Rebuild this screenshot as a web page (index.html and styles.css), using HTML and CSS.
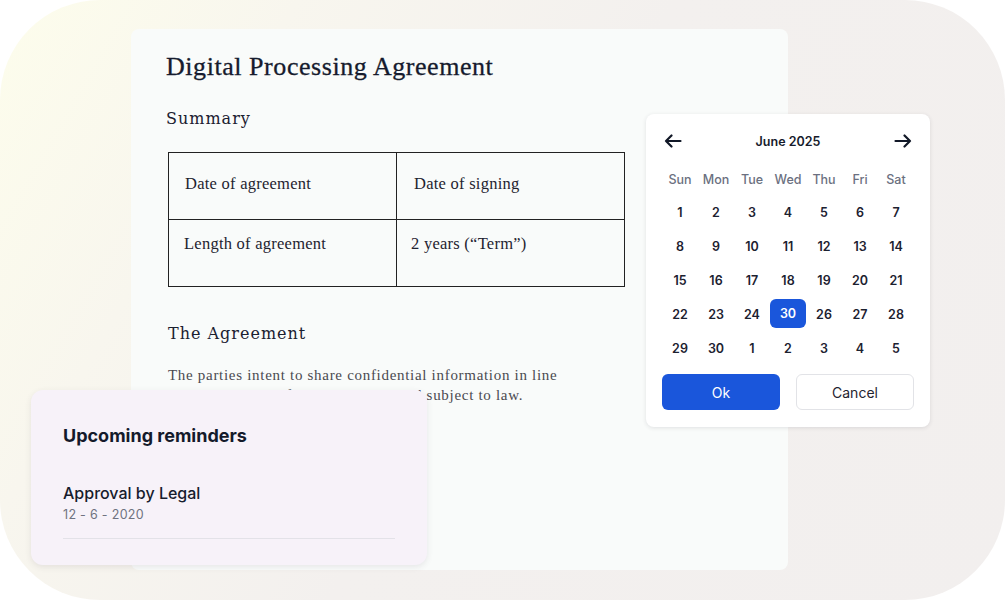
FILE: index.html
```html
<!DOCTYPE html>
<html lang="en">
<head>
<meta charset="utf-8">
<title>Digital Processing Agreement</title>
<link rel="stylesheet" href="styles.css">
</head>
<body>
<div class="stage">
  <section class="doc">
    <h1 class="doc-title">Digital Processing Agreement</h1>
    <h2 class="doc-sub">Summary</h2>
    <table class="summary">
      <tr>
        <td class="c1">Date of agreement</td>
        <td class="c2">Date of signing</td>
      </tr>
      <tr>
        <td class="c1 r2">Length of agreement</td>
        <td class="c2 r2">2 years (“Term”)</td>
      </tr>
    </table>
    <h2 class="doc-sub sub2">The Agreement</h2>
    <p class="doc-text">The parties intent to share confidential information in line and the purpose of this agreement and subject to law.</p>
  </section>

  <aside class="reminders">
    <h3 class="rem-title">Upcoming reminders</h3>
    <div class="rem-item">
      <div class="rem-name">Approval by Legal</div>
      <div class="rem-date">12 - 6 - 2020</div>
    </div>
  </aside>

  <div class="calendar">
    <div class="cal-head">
      <svg class="arrow" width="18" height="14" viewBox="0 0 18 14"><path d="M16.5 7H2M7.5 1.5L2 7l5.5 5.5" fill="none" stroke="#111827" stroke-width="2.2" stroke-linecap="round" stroke-linejoin="round"/></svg>
      <span class="cal-month">June 2025</span>
      <svg class="arrow" width="18" height="14" viewBox="0 0 18 14"><path d="M1.5 7H16M10.5 1.5L16 7l-5.5 5.5" fill="none" stroke="#111827" stroke-width="2.2" stroke-linecap="round" stroke-linejoin="round"/></svg>
    </div>
    <div class="cal-grid">
      <span class="dn">Sun</span><span class="dn">Mon</span><span class="dn">Tue</span><span class="dn">Wed</span><span class="dn">Thu</span><span class="dn">Fri</span><span class="dn">Sat</span>
      <span class="d">1</span><span class="d">2</span><span class="d">3</span><span class="d">4</span><span class="d">5</span><span class="d">6</span><span class="d">7</span>
      <span class="d">8</span><span class="d">9</span><span class="d">10</span><span class="d">11</span><span class="d">12</span><span class="d">13</span><span class="d">14</span>
      <span class="d">15</span><span class="d">16</span><span class="d">17</span><span class="d">18</span><span class="d">19</span><span class="d">20</span><span class="d">21</span>
      <span class="d">22</span><span class="d">23</span><span class="d">24</span><span class="d sel">30</span><span class="d">26</span><span class="d">27</span><span class="d">28</span>
      <span class="d">29</span><span class="d">30</span><span class="d">1</span><span class="d">2</span><span class="d">3</span><span class="d">4</span><span class="d">5</span>
    </div>
    <div class="cal-actions">
      <button class="btn btn-ok">Ok</button>
      <button class="btn btn-cancel">Cancel</button>
    </div>
  </div>
</div>
</body>
</html>
```

FILE: styles.css
```css
* { box-sizing: border-box; }
html, body { margin: 0; padding: 0; background: #ffffff; }
body { width: 1005px; height: 600px; overflow: hidden; }

.stage {
  position: relative;
  width: 1005px;
  height: 600px;
  border-radius: 100px;
  background: linear-gradient(120deg, #fdfdec 0%, #f8f6ee 22%, #f3f0ee 50%, #f2efee 100%);
  padding: 29px 0 0 131px;
}

.doc {
  width: 657px;
  height: 541px;
  background: #f9fbfa;
  border-radius: 8px;
  padding: 22px 35px 0 35px;
}

.doc-title {
  margin: 0;
  font-family: "Liberation Serif", serif;
  font-weight: 400;
  font-size: 26px;
  line-height: 32px;
  color: #161b2e;
  letter-spacing: 0.55px;
  -webkit-text-stroke: 0.3px #161b2e;
}

.doc-sub {
  margin: 25px 0 0 0;
  font-family: "DejaVu Serif", serif;
  font-weight: 400;
  font-size: 16px;
  line-height: 22px;
  color: #1b2030;
  letter-spacing: 1px;
}

.summary {
  margin: 22px 0 0 2px;
  width: 457px;
  border-collapse: collapse;
  font-family: "Liberation Serif", serif;
  font-size: 16.5px;
  letter-spacing: 0.25px;
  color: #1f2330;
}
.summary td {
  border: 1.5px solid #222222;
  height: 67px;
  vertical-align: top;
  padding: 21px 16px 0 16px;
  width: 50%;
}
.summary td.c2 { padding-left: 17px; }
.summary td.r2 { padding: 14px 16px 0 15px; }
.summary td.c2.r2 { padding-left: 14px; }

.sub2 { margin-top: 36px; margin-left: 2px; }

.doc-text {
  margin: 20px 0 0 2px;
  width: 400px;
  font-family: "Liberation Serif", serif;
  font-size: 15px;
  line-height: 20px;
  letter-spacing: 0.7px;
  color: #4a4a50;
}

.reminders {
  position: absolute;
  left: 31px;
  top: 390px;
  width: 396px;
  height: 175px;
  background: #f7f2f9;
  border-radius: 12px;
  box-shadow: 0 2px 6px rgba(60, 50, 70, 0.10);
  padding: 34px 32px 0 32px;
  font-family: Inter, "Liberation Sans", sans-serif;
}
.rem-title {
  margin: 0;
  font-size: 18px;
  line-height: 24px;
  font-weight: 700;
  color: #141a2b;
}
.rem-item {
  margin-top: 35px;
  padding-bottom: 15px;
  border-bottom: 1px solid #e3e2e8;
}
.rem-name {
  font-size: 16px;
  line-height: 20px;
  font-weight: 500;
  color: #171c2d;
}
.rem-date {
  margin-top: 4px;
  font-size: 12.5px;
  line-height: 16px;
  letter-spacing: 0.3px;
  color: #6f7280;
}

.calendar {
  position: absolute;
  left: 646px;
  top: 114px;
  width: 284px;
  height: 313px;
  background: #ffffff;
  border-radius: 8px;
  box-shadow: 0 1px 4px rgba(40, 40, 60, 0.12);
  padding: 16px 16px 0 16px;
  font-family: Inter, "Liberation Sans", sans-serif;
}
.cal-head {
  display: flex;
  align-items: center;
  justify-content: space-between;
  height: 22px;
  padding: 0 2px 0 2px;
}
.arrow { display: block; }
.cal-month {
  font-size: 12.5px;
  font-weight: 600;
  color: #161b2b;
}
.cal-grid {
  margin-top: 11px;
  display: grid;
  grid-template-columns: repeat(7, 36px);
  grid-template-rows: 32px repeat(5, 34px);
}
.cal-grid span {
  display: flex;
  align-items: center;
  justify-content: center;
  font-size: 12.5px;
}
.dn {
  font-weight: 500;
  color: #6b7080;
}
.d {
  font-weight: 600;
  color: #1c2130;
}
.d.sel {
  background: #1a56db;
  color: #ffffff;
  border-radius: 6px;
  margin: 2px 0 3px 0;
}
.cal-actions {
  margin-top: 9px;
  display: flex;
  gap: 16px;
}
.btn {
  width: 118px;
  height: 36px;
  border-radius: 6px;
  font-family: Inter, "Liberation Sans", sans-serif;
  font-size: 14px;
  font-weight: 400;
}
.btn-ok {
  background: #1a56db;
  border: none;
  color: #ffffff;
}
.btn-cancel {
  background: #ffffff;
  border: 1px solid #e2e3e7;
  color: #1f2330;
}
```
